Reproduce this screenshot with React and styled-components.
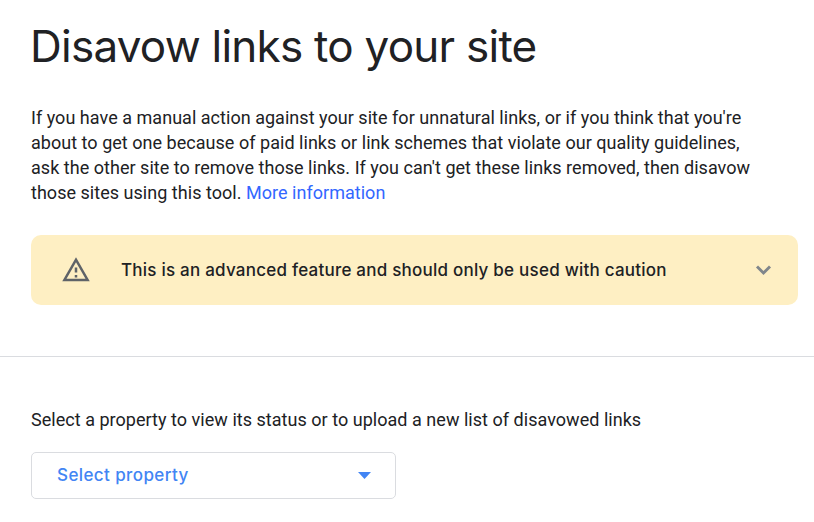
import React from 'react';
import styled, {createGlobalStyle} from 'styled-components';

function App () {
    return (
        <>
            <GlobalStyle/>
            <Page>
                <Intro>
                    <Title>Disavow links to your site</Title>
                    <Text>
                        If you have a manual action against your site for unnatural links, or if you think that you're<br/>
                        about to get one because of paid links or link schemes that violate our quality guidelines,<br/>
                        ask the other site to remove those links. If you can't get these links removed, then disavow<br/>
                        those sites using this tool. <More href="#">More information</More>
                    </Text>
                    <Notice>
                        <WarningIcon viewBox="0 0 24 24">
                            <path d="M12 5.7L19.6 19H4.4L12 5.7M12 1.8L1 21h22L12 1.8zm1 14.2h-2v2h2v-2zm0-6h-2v4h2v-4z"/>
                        </WarningIcon>
                        <NoticeText>This is an advanced feature and should only be used with caution</NoticeText>
                        <Chevron viewBox="0 0 25 25">
                            <path d="M6 8.5l6.5 6.5L19 8.5" fill="none" strokeWidth="2.9"/>
                        </Chevron>
                    </Notice>
                </Intro>
                <Property>
                    <Label>Select a property to view its status or to upload a new list of disavowed links</Label>
                    <Select type="button">
                        <SelectText>Select property</SelectText>
                        <Arrow viewBox="0 0 13 7">
                            <path d="M0 0h13L6.5 7z"/>
                        </Arrow>
                    </Select>
                </Property>
            </Page>
        </>
    )
}

const GlobalStyle = createGlobalStyle`
    * {
        box-sizing: border-box;
    }
    body {
        margin: 0;
        background: #fff;
        color: #202124;
        font-family: Roboto, sans-serif;
    }
`;
const Page = styled.main`
    height: 522px;
    overflow: hidden;
`;
const Intro = styled.section`
    height: 357px;
    padding: 19px 16px 0 31px;
    border-bottom: 1px solid #dadce0;
`;
const Title = styled.h1`
    margin: 0 0 0 -1px;
    font: 400 44px/54px Inter, sans-serif;
    letter-spacing: -0.75px;
    white-space: nowrap;
`;
const Text = styled.p`
    margin: 32px 0 0;
    font-size: 18px;
    line-height: 25px;
    letter-spacing: 0.03px;
    white-space: nowrap;
`;
const More = styled.a`
    color: #3367ff;
    text-decoration: none;
`;
const Notice = styled.div`
    display: flex;
    align-items: center;
    height: 70px;
    margin-top: 30px;
    padding: 0 22px 0 30px;
    border-radius: 10px;
    background: #feefc3;
`;
const WarningIcon = styled.svg`
    width: 30px;
    height: 30px;
    fill: #5f6368;
`;
const NoticeText = styled.span`
    flex: 1;
    margin-left: 30px;
    font: 500 17px/24px Inter, sans-serif;
    letter-spacing: 0.23px;
    white-space: nowrap;
`;
const Chevron = styled.svg`
    width: 25px;
    height: 25px;
    stroke: #80868b;
`;
const Property = styled.section`
    padding: 50px 31px 0;
`;
const Label = styled.p`
    margin: 0;
    font-size: 18px;
    line-height: 25px;
    letter-spacing: 0.03px;
    white-space: nowrap;
`;
const Select = styled.button`
    display: flex;
    align-items: center;
    justify-content: space-between;
    width: 365px;
    height: 47px;
    margin-top: 20px;
    padding: 0 24px 1px 25px;
    border: 1px solid #dadce0;
    border-radius: 5px;
    background: #fff;
    color: #4285f4;
`;
const SelectText = styled.span`
    font: 500 17px/24px Inter, sans-serif;
    letter-spacing: 0.4px;
`;
const Arrow = styled.svg`
    width: 13px;
    height: 7px;
    fill: currentColor;
`;
export default App;
